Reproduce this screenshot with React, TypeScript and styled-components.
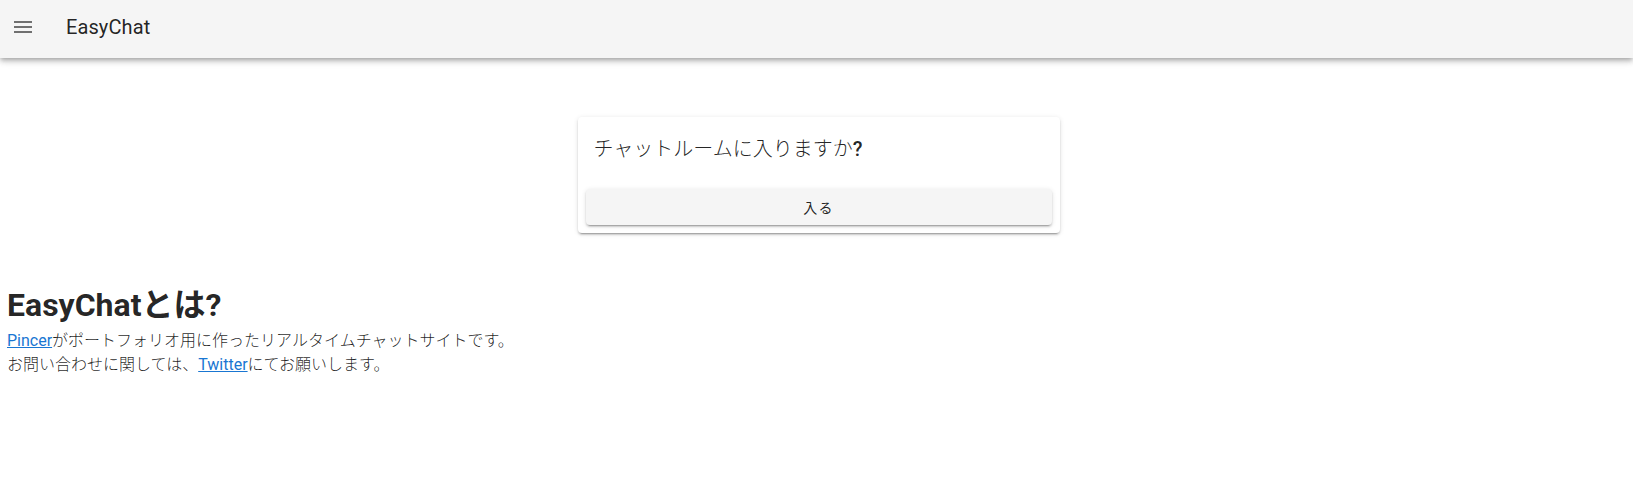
import React from "react";
import styled, { createGlobalStyle } from "styled-components";

const GlobalStyle = createGlobalStyle`
  html, body { margin: 0; padding: 0; background: #ffffff; }
  body {
    font-family: Roboto, "Noto Sans CJK JP", sans-serif;
    color: rgba(0, 0, 0, 0.87);
    -webkit-font-smoothing: antialiased;
  }
  * { box-sizing: border-box; }
`;

const AppBar = styled.header`
  height: 58px;
  background: #f5f5f5;
  display: flex;
  align-items: center;
  padding: 0 16px 5px 11px;
  box-shadow: 0 2px 4px -1px rgba(0, 0, 0, 0.2), 0 4px 5px 0 rgba(0, 0, 0, 0.14),
    0 1px 10px 0 rgba(0, 0, 0, 0.12);
  position: relative;
  z-index: 1;
`;

const NavIcon = styled.button`
  width: 24px;
  height: 24px;
  padding: 0;
  border: 0;
  background: transparent;
  display: flex;
  align-items: center;
  justify-content: center;
  color: rgba(0, 0, 0, 0.54);
  cursor: pointer;
`;

const Title = styled.div`
  margin-left: 31px;
  font-size: 20px;
  font-weight: 400;
  letter-spacing: 0.1px;
  color: rgba(0, 0, 0, 0.87);
`;

const Main = styled.main`
  padding: 59px 7px 0 7px;
`;

const CardRow = styled.div`
  display: flex;
  justify-content: center;
  padding-left: 4px;
`;

const Card = styled.div`
  width: 482px;
  background: #ffffff;
  border-radius: 4px;
  box-shadow: 0 3px 1px -2px rgba(0, 0, 0, 0.2), 0 2px 2px 0 rgba(0, 0, 0, 0.14),
    0 1px 5px 0 rgba(0, 0, 0, 0.12);
`;

const CardTitle = styled.div`
  padding: 16px;
  font-size: 20px;
  line-height: 32px;
  font-weight: 300;
  color: rgba(0, 0, 0, 0.87);
`;

const Q = styled.span`
  font-weight: 500;
`;

const CardActions = styled.div`
  padding: 8px;
  display: flex;
`;

const EnterButton = styled.button`
  flex: 1;
  height: 36px;
  border: 0;
  border-radius: 4px;
  background: #f5f5f5;
  font-family: Roboto, "Noto Sans CJK JP", sans-serif;
  font-size: 14px;
  font-weight: 400;
  letter-spacing: 1.2px;
  color: rgba(0, 0, 0, 0.87);
  box-shadow: 0 3px 1px -2px rgba(0, 0, 0, 0.2), 0 2px 2px 0 rgba(0, 0, 0, 0.14),
    0 1px 5px 0 rgba(0, 0, 0, 0.12);
  cursor: pointer;
`;

const About = styled.section`
  margin-top: 53px;
`;

const Heading = styled.h1`
  margin: 0 0 5px 0;
  font-size: 32px;
  line-height: 38px;
  font-weight: 700;
  color: rgba(0, 0, 0, 0.87);
`;

const Para = styled.p`
  margin: 0;
  font-size: 16px;
  line-height: 24px;
  font-weight: 300;
  color: rgba(0, 0, 0, 0.87);
`;

const Link = styled.a`
  color: #1976d2;
  text-decoration: underline;
  font-weight: 400;
`;

export default function App() {
  return (
    <>
      <GlobalStyle />
      <AppBar>
        <NavIcon aria-label="menu">
          <svg width="24" height="24" viewBox="0 0 24 24" fill="currentColor">
            <path d="M3 6h18v2H3V6m0 5h18v2H3v-2m0 5h18v2H3v-2z" />
          </svg>
        </NavIcon>
        <Title>EasyChat</Title>
      </AppBar>
      <Main>
        <CardRow>
          <Card>
            <CardTitle>
              チャットルームに入りますか<Q>?</Q>
            </CardTitle>
            <CardActions>
              <EnterButton>入る</EnterButton>
            </CardActions>
          </Card>
        </CardRow>
        <About>
          <Heading>EasyChatとは?</Heading>
          <Para>
            <Link href="#">Pincer</Link>がポートフォリオ用に作ったリアルタイムチャットサイトです。
            <br />
            お問い合わせに関しては、<Link href="#">Twitter</Link>にてお願いします。
          </Para>
        </About>
      </Main>
    </>
  );
}
